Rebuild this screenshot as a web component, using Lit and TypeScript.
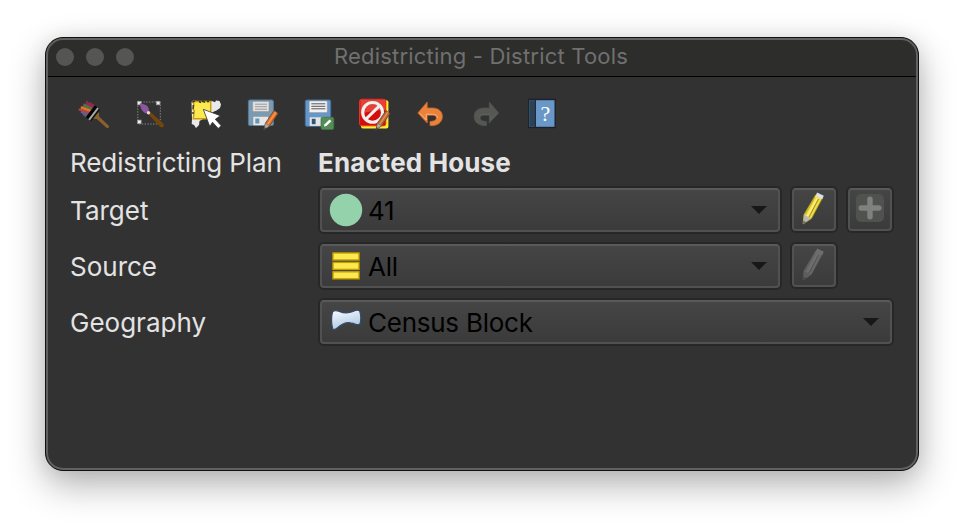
import { LitElement, html, css, svg, nothing } from "lit";
import { customElement, property } from "lit/decorators.js";

const pencil = (a: string, b: string) => svg`
  <path d="M28 13.5 32 16.5 23.5 29 18 32.5 19.5 26Z" fill="${a}" stroke="#69452f" stroke-width=".8"/>
  <path d="M30 15 21.5 27.5" stroke="${b}" stroke-width="1.6"/>
  <path d="M19.5 26 23.5 29 18 32.5Z" fill="#b9aaa0" stroke="#675c55" stroke-width=".5"/>
  <path d="M18.6 30 20 31.2 18 32.5Z" fill="#333"/>`;

const undo = (fill: string, edge: string, hi: string) => svg`
  <path d="M3.8 16 13.2 5V11H18.5C24.5 11 28.4 14.5 28.4 19.5 28.4 25.5 23 29.2 16 28.6V24.5C20.8 24.3 22.3 22.8 22.3 20.8 22.3 19 21 18.2 18.5 18.2H13.2V26Z" fill="${fill}" stroke="${edge}" stroke-width=".8" stroke-linejoin="round"/>
  <path d="M6 16.3 12.2 23V17.2H18.5C21.5 17.2 23.4 18.6 23.4 21" fill="none" stroke="${hi}" stroke-width="1"/>`;

const icons: Record<string, unknown> = {
  paint: svg`
    <path d="M8.5 3.5 11 6 12.5 5.5 18 9.5 8.5 20.5 5.5 18.5 5 17 2.8 15.5 3 14 0 12.3 3 11.5 2.5 9.5 5.5 9 5.5 6.5 8.5 7Z" fill="#8c5440"/>
    <path d="M8.5 3.5 11 6 12.5 5.5 18 9.5 16.3 11.5 6 6.5 8.5 7Z" fill="#98264f"/>
    <path d="M5.5 8 15.5 12.3" stroke="#3a7d50" stroke-width="2"/>
    <path d="M3 10.3 14 14.4" stroke="#df752b" stroke-width="2.4"/>
    <path d="M1 12.5 12.3 16.4" stroke="#ba4438" stroke-width="2"/>
    <path d="M3 14.8 11 18" stroke="#6a5aa2" stroke-width="1.8"/>
    <path d="M5 17 9 19.5" stroke="#44669b" stroke-width="1.6"/>
    <path d="M16.8 8.2 19.3 10.4 10.3 22.2 7.8 20Z" fill="#050505"/>
    <path d="M19.3 10.4 20.8 11.8 12 23.4 10.3 22.2Z" fill="#a9a9a9"/>
    <path d="M20.8 11.8 22 13 13.2 24.3 12 23.4Z" fill="#151515"/>
    <path d="M20.6 15 21.3 19.8 30.8 28.8C31.6 30.6 30 31.7 28.4 30.8L18.8 22 15.3 21.7Z" fill="#89602c"/>`,
  select: svg`
    <rect x="3.8" y="5" width="22.5" height="22" fill="none" stroke="#858585" stroke-dasharray="1.4 1.4"/>
    <g fill="#eee" stroke="#999" stroke-width=".7"><rect x="3.6" y="4.3" width="3.5" height="3.5"/><rect x="22.4" y="4.3" width="3.5" height="3.5"/><rect x="3.6" y="23.1" width="3.5" height="3.5"/></g>
    <path d="M15.8 14.6 29 26.3C31 28.8 29 31.6 26 29.8L13.8 16.8Z" fill="#75450b"/>
    <path d="M5.8 6.3C10 7 14.5 8.3 14.8 12.5L15 15 12.6 16.6C8 15.3 6.6 11.5 5.8 6.3Z" fill="#8d579f"/>
    <circle cx="14.5" cy="15.7" r="1.7" fill="#ddd"/>`,
  map: svg`
    <path d="M18 6 22 4 25 5.3 26 3.5 29.5 4 31 7.5 30 11 26.5 13.5 23 15 18 19 13 22 9.5 24 9 28 6 31 4 28 1.7 27 2 22 1.5 5 4 3.5Z" fill="#e9e9e9"/>
    <path d="M3 4.5H20.7V21.7H3.3L4.3 14 3 12 4 8Z" fill="#fce94f" stroke="#c99c12" stroke-width="1.5"/>
    <path d="M2.4 5 5 4M3.2 8V12M3 15V17M9 4.5 11 5.5M12 4 15 5.3M17 4.5H19" stroke="#38361f" stroke-width="1.4" fill="none"/>
    <path d="M13.3 12.3 30.3 18.7 25.3 22.3 31.2 28.8 28.2 31.4 22.5 25.2 19.8 29.5Z" fill="#fff" stroke="#333" stroke-width=".8"/>`,
  edit: svg`
    <rect x="2.4" y="3" width="25" height="25.5" rx="1.5" fill="#7d9bb0" stroke="#537a99"/>
    <rect x="6.7" y="4.5" width="16.3" height="10" rx=".8" fill="#e1e1e1" stroke="#989898" stroke-width=".6"/>
    <path d="M9 7.2H21M9 9.7H21M9 12.2H21" stroke="#999"/>
    <rect x="7.3" y="19.8" width="15" height="8.4" fill="#e6e6e6"/><rect x="9.3" y="21.5" width="4" height="5" fill="#6995ad"/>
    ${pencil("#dc6b22", "#ef9855")}`,
  save: svg`
    <rect x="3.3" y="3" width="25.4" height="26.3" rx="1.5" fill="#6796c9" stroke="#44709f"/>
    <rect x="7.2" y="4" width="18" height="11.5" rx=".8" fill="#f1f1f1" stroke="#a0a0a0" stroke-width=".6"/>
    <path d="M9.3 6.8H23.3M9.3 9.3H23.3M9.3 11.8H23.3" stroke="#555"/>
    <rect x="7.7" y="20.3" width="15" height="8.6" fill="#e5e5e5"/><rect x="9.8" y="21.8" width="3.8" height="5.4" fill="#30577a"/>
    <rect x="19" y="20.3" width="12.8" height="12.2" rx="1.4" fill="#558b57" stroke="#397740" stroke-width=".7"/>
    <path d="M22 29.5 22.6 27.2 27.5 22.4 29.4 24.2 24.3 29Z" fill="#fff"/>`,
  ban: svg`
    <rect x="3" y="3.2" width="27.4" height="28.3" rx="2" fill="#fcee2a"/>
    <rect x="1.6" y="2.3" width="26.2" height="26.5" rx="2" fill="#d40d0d" stroke="#ed3528"/>
    <path d="M2.5 3H27V13Q15 13 2.5 17Z" fill="#ee6555" opacity=".6"/>
    <circle cx="14.6" cy="15.4" r="9.9" fill="none" stroke="#f1eeee" stroke-width="3.1"/><path d="M8 22 21.5 8.8" stroke="#f1eeee" stroke-width="3.1"/>
    ${pencil("#bd6132", "#dc8d59")}`,
  undo: undo("#e9823a", "#cf6428", "#ffb27a"),
  redo: svg`<g transform="translate(32.5 0) scale(-1 1)">${undo("#555753", "#50524f", "#5e605d")}</g>`,
  help: svg`
    <rect x="2.8" y="2.5" width="26.4" height="28" fill="#6897c8" stroke="#1d202b" stroke-width="1.4"/>
    <rect x="3.5" y="3.2" width="5.8" height="26.6" fill="#2b4255"/><path d="M9.4 3V30" stroke="#1d202b"/>
    <text x="19.3" y="23.6" text-anchor="middle" fill="#fff" font-family="Liberation Serif,serif" font-size="22">?</text>`,
  pen: svg`
    <path d="M17.5 3 24.5 6 13.5 26.5 5 32 6 22.5Z" fill="#efdf46" stroke="#a68f20" stroke-width=".8"/>
    <path d="M19 6.5 9 24.7" stroke="#fff18d" stroke-width="1.3"/><path d="M20.5 7 11 25.2" stroke="#a28a18" stroke-width="1"/><path d="M16.8 5.5 7.3 22.7" stroke="#c6ae24"/>
    <path d="M6 23 13.3 26.3 5 32Z" fill="#b6b6b2"/><path d="M5.4 28.7 8 30 5 32Z" fill="#666"/>
    <path d="M18.3 2.3 25 5.5" stroke="#dedee4" stroke-width="3.8"/>`,
  plus: svg`
    <rect x="2" y="2" width="28" height="28" rx="5" fill="#50524f"/><path d="M16 7.2V24.8M7.2 16H24.8" stroke="#80817f" stroke-width="5.4" stroke-linecap="round"/>`,
  district: svg`<circle cx="16" cy="16" r="16.2" fill="#94d2ac"/>`,
  bars: svg`<g fill="#fce94f" stroke="#c4a000" stroke-width="1.4"><rect x="3" y="3" width="26" height="7"/><rect x="3" y="12.4" width="26" height="7"/><rect x="3" y="21.8" width="26" height="7"/></g>`,
  polygon: svg`<defs><linearGradient id="p" x2=".4" y2="1"><stop stop-color="#fafcff"/><stop offset="1" stop-color="#aec9e5"/></linearGradient></defs>
    <path d="M2.5 6C4.5 3.8 7.5 4.7 9.3 5.4 14 7.4 18.5 7.5 23 5.5 25.5 4.2 28.5 3.4 29.8 5.2 31 9 31 14 30 18 28 19.8 26 18.2 22 17.2 16 15.4 11 18.5 7 22.2 5 24 3 23.7 2.5 22.4 1.4 17 1.2 11 2.5 6Z" fill="url(#p)" stroke="#344b65" stroke-width="1.2"/>`,
};

@customElement("tool-icon")
class ToolIcon extends LitElement {
  @property() name = "";
  static styles = css`:host{display:block;width:32px;height:32px;flex:none} svg{display:block;overflow:visible}`;
  render() {
    return html`<svg width="32" height="32" viewBox="0 0 32 32">${icons[this.name] ?? nothing}</svg>`;
  }
}

@customElement("combo-box")
class ComboBox extends LitElement {
  @property() icon = "";
  @property() label = "";
  static styles = css`
    :host{display:flex;box-sizing:border-box;height:44px;align-items:center;padding:0 11px 0 8px;
      border:2px solid #515151;border-top-color:#5a5a5a;border-radius:4px;
      background:linear-gradient(#454545,#3b3b3b);box-shadow:0 0 0 2px #272727;color:#000}
    .label{flex:1;margin-left:6px;white-space:nowrap;line-height:32px;padding-top:2px;letter-spacing:-.25px}
  `;
  render() {
    return html`<tool-icon name=${this.icon}></tool-icon><span class="label">${this.label}</span>
      <svg width="16" height="8"><path d="M0 0H16L8 8Z" fill="#171717"/></svg>`;
  }
}

@customElement("app-root")
class AppRoot extends LitElement {
  static styles = css`
    :host{display:block;box-sizing:border-box;width:964px;height:524px;padding:37px 45px 53px;background:#fff;overflow:hidden;
      font-family:Inter,"Liberation Sans",sans-serif;font-size:26px;color:#e3e3e3}
    .window{box-sizing:border-box;height:434px;border:1px solid #101010;border-radius:18px;background:#323232;overflow:hidden;
      box-shadow:inset 0 0 0 2px #606262,0 14px 36px rgba(0,0,0,.3),0 0 20px rgba(0,0,0,.08)}
    .title{display:grid;grid-template-columns:1fr auto 1fr;align-items:center;box-sizing:border-box;height:39px;border-bottom:1px solid #000;
      margin:0 2px;border-radius:15px 15px 0 0;background:#2d2d2b;box-shadow:inset 0 2px #606262;color:#707070;font-size:22px}
    .caption{letter-spacing:.2px;line-height:30px;margin-top:-2px;margin-left:-2px}
    .lights{display:flex;gap:12px;margin-left:8px}
    .light{width:18px;height:18px;border-radius:50%;background:#555553}
    .tools{display:flex;gap:24px;padding:20px 32px 0}
    .form{display:grid;grid-template-columns:250px 1fr;grid-template-rows:47px 56px 56px 56px;padding:6px 26px 0 24px;line-height:30px}
    .cell{padding-top:14px;white-space:nowrap}
    .first{padding-top:13px;white-space:nowrap;letter-spacing:-.1px}
    .plan{font-weight:700;margin-left:-2px;letter-spacing:.12px}
    .fields{display:flex;gap:12px;padding-top:6px}
    combo-box{flex:1}
    .source{flex:none;width:460px}
    .button{box-sizing:border-box;width:44px;height:43px;padding:3px 4px;border:2px solid #515151;border-top-color:#5a5a5a;border-radius:4px;background:linear-gradient(#454545,#3b3b3b);box-shadow:0 0 0 2px #272727}
    .button tool-icon{margin-top:-1px}
    .off tool-icon{filter:grayscale(1) brightness(.85);opacity:.35}
  `;
  render() {
    return html`<div class="window">
      <div class="title"><div class="lights"><i class="light"></i><i class="light"></i><i class="light"></i></div><span class="caption">Redistricting - District Tools</span></div>
      <div class="tools">${["paint", "select", "map", "edit", "save", "ban", "undo", "redo", "help"].map((n) => html`<tool-icon name=${n}></tool-icon>`)}</div>
      <div class="form">
        <span class="first">Redistricting Plan</span><span class="first plan">Enacted House</span>
        <span class="cell">Target</span><div class="fields"><combo-box icon="district" label="41"></combo-box><div class="button"><tool-icon name="pen"></tool-icon></div><div class="button"><tool-icon name="plus"></tool-icon></div></div>
        <span class="cell">Source</span><div class="fields"><combo-box class="source" icon="bars" label="All"></combo-box><div class="button off"><tool-icon name="pen"></tool-icon></div></div>
        <span class="cell">Geography</span><div class="fields"><combo-box icon="polygon" label="Census Block"></combo-box></div>
      </div>
    </div>`;
  }
}
